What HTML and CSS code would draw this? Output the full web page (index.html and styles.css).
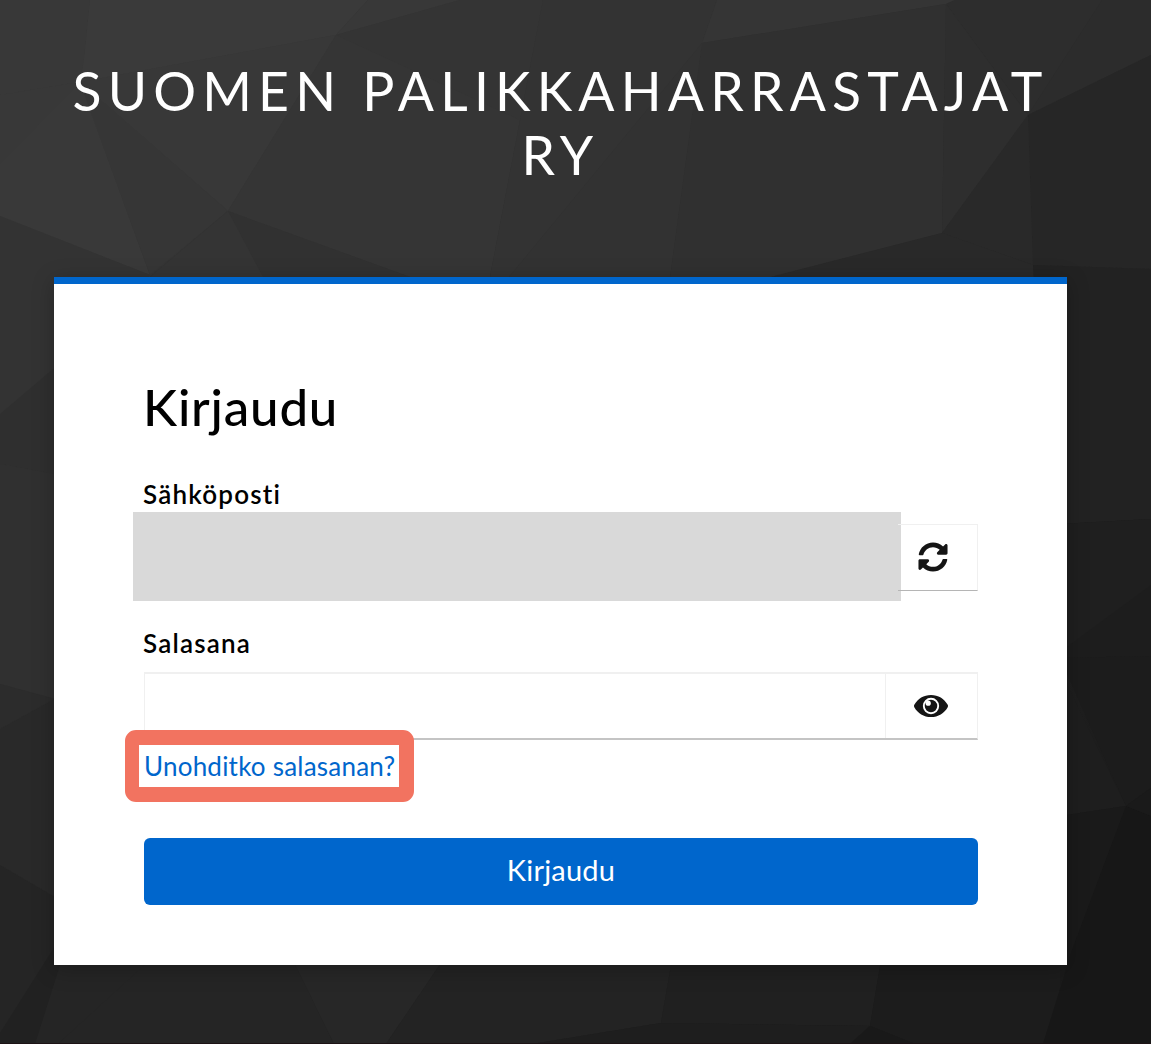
FILE: index.html
```html
<!DOCTYPE html>
<html lang="fi">
<head>
<meta charset="utf-8">
<title>Kirjaudu – Suomen Palikkaharrastajat ry</title>
<link rel="stylesheet" href="styles.css">
</head>
<body>
<div class="page">
  <svg class="backdrop" viewBox="0 0 1151 1044" preserveAspectRatio="none" aria-hidden="true">
    <defs>
      <linearGradient id="shade" gradientUnits="userSpaceOnUse" x1="200" y1="0" x2="950" y2="1044">
        <stop offset="0" stop-color="#393939"/><stop offset=".5" stop-color="#292929"/><stop offset="1" stop-color="#191919"/>
      </linearGradient>
    </defs>
    <rect width="1151" height="1044" fill="url(#shade)"/>
    <path fill="#383838" d="M0 0H90L84 59 80 82 0 95z"/>
    <path fill="#3a3a3a" d="M90 0H368L336 35 80 82 84 59z"/>
    <path fill="#383838" d="M0 95 80 82 0 164z"/>
    <path fill="#383838" d="M80 82 336 35 228 211z"/>
    <path fill="#393939" d="M0 164 80 82 150 275 0 216z"/>
    <path fill="#363636" d="M80 82 228 211 150 275z"/>
    <path fill="#353535" d="M336 35 368 0H543L490 277H410L228 211z"/>
    <path fill="#383838" d="M336 35 368 0H460z"/>
    <path fill="#343434" d="M336 35 460 0H543L520 120z"/>
    <path fill="#313131" d="M228 211 410 277H150z"/>
    <path fill="#343434" d="M228 211 263 277H150z"/>
    <path fill="#333" d="M0 216 150 275 54 367 0 414z"/>
    <path fill="#333" d="M543 0H717L702 43 575 197 509 277H490z"/>
    <path fill="#353535" d="M717 0H955L946 4 702 43z"/>
    <path fill="#303030" d="M702 43 946 4 942 233 770 277H670z"/>
    <path fill="#323232" d="M702 43 670 277H509L575 197z"/>
    <path fill="#2d2d2d" d="M946 4 955 0H1102L1028 115z"/>
    <path fill="#2e2e2e" d="M946 4 1028 115 942 233z"/>
    <path fill="#2c2c2c" d="M1102 0H1151V55L1028 115z"/>
    <path fill="#262626" d="M1028 115 1151 55V269L1033 265z"/>
    <path fill="#292929" d="M1028 115 1033 265 942 233z"/>
    <path fill="#292929" d="M942 233 1033 265V280H760z"/>
    <path fill="#222" d="M1033 265 1151 269V519L1050 525z"/>
    <path fill="#2f2f2f" d="M0 414 60 363V475L0 464z"/>
    <path fill="#303030" d="M0 464 60 475V700L0 684z"/>
    <path fill="#2c2c2c" d="M0 684 54 699 0 729z"/>
    <path fill="#292929" d="M0 729 60 696V900L0 865z"/>
    <path fill="#252525" d="M0 865 60 900V940L0 1033z"/>
    <path fill="#212121" d="M0 1033 60 938V965H150L58 1044H0z"/>
    <path fill="#252525" d="M60 965H150L58 1044H35z"/>
    <path fill="#252525" d="M150 960H293L334 1044H58z"/>
    <path fill="#272727" d="M293 960H443L386 1044H334z"/>
    <path fill="#232323" d="M443 960H672L661 1023 532 1044H386z"/>
    <path fill="#202020" d="M672 960H881L870 1026 661 1023z"/>
    <path fill="#1e1e1e" d="M661 1023 870 1026 850 1044H532z"/>
    <path fill="#1c1c1c" d="M881 960H1072L1043 1044H915L870 1026z"/>
    <path fill="#191919" d="M870 1026 915 1044H850z"/>
    <path fill="#1d1d1d" d="M1060 524 1151 519V656L1060 658z"/>
    <path fill="#1f1f1f" d="M1060 524 1151 519V585L1060 652z"/>
    <path fill="#1c1c1c" d="M1060 658 1151 656V788L1126 806z"/>
    <path fill="#1e1e1e" d="M1060 670 1126 806 1060 816z"/>
    <path fill="#1a1a1a" d="M1060 816 1126 806 1060 985z"/>
    <path fill="#171717" d="M1126 806 1151 816V1044H1043L1072 950z"/>
    <path fill="#1a1a1a" d="M1126 806 1151 788V816z"/>
    <path fill="#1d1315" d="M0 1043H1151V1044H0z"/>
  </svg>
  <main class="login">
    <h1 class="realm">Suomen Palikkaharrastajat ry</h1>
    <section class="card">
      <h2 class="title">Kirjaudu</h2>
      <form class="form">
        <div class="field">
          <span class="label">Sähköposti</span>
          <div class="row account">
            <div class="redacted"></div>
            <button class="icon-button" type="button" aria-label="Vaihda käyttäjä">
              <svg class="sync" viewBox="0 0 512 512"><path d="M370.72 133.28C339.458 104.008 298.888 87.962 255.848 88c-77.458.068-144.328 53.178-162.791 126.85-1.344 5.363-6.122 9.15-11.651 9.15H24.103c-7.498 0-13.194-6.807-11.807-14.176C33.933 94.924 134.813 8 256 8c66.448 0 126.791 26.136 171.315 68.685L463.03 40.97C478.149 25.851 504 36.559 504 57.941V192c0 13.255-10.745 24-24 24H345.941c-21.382 0-32.09-25.851-16.971-40.971zM32 296h134.059c21.382 0 32.09 25.851 16.971 40.971l-41.75 41.75c31.262 29.273 71.835 45.319 114.876 45.28 77.418-.07 144.315-53.144 162.787-126.849 1.344-5.363 6.122-9.15 11.651-9.15h57.304c7.498 0 13.194 6.807 11.807 14.176C478.067 417.076 377.187 504 256 504c-66.448 0-126.791-26.136-171.315-68.685L48.97 471.03C33.851 486.149 8 475.441 8 454.059V320c0-13.255 10.745-24 24-24z"/></svg>
            </button>
          </div>
        </div>
        <div class="field password-field">
          <label class="label" for="password">Salasana</label>
          <div class="row password">
            <input class="input" id="password" type="password">
            <button class="icon-button" type="button" aria-label="Näytä salasana">
              <svg class="eye" viewBox="0 0 34 22"><path fill="#151515" d="M.3 9.8C3.700 3.700 9.800 0 17 0s13.300 3.700 16.700 9.800c.4.800.4 1.600 0 2.400C30.300 18.300 24.200 22 17 22S3.700 18.300.3 12.200c-.4-.8-.4-1.600 0-2.400z"/><circle cx="17" cy="11" r="7.200" fill="#151515" stroke="#fff" stroke-width="1.900"/><circle cx="14.200" cy="8.200" r="2.600" fill="#fff"/></svg>
            </button>
          </div>
        </div>
        <div class="forgot"><a class="link" href="#">Unohditko salasanan?</a></div>
        <button class="submit" type="submit">Kirjaudu</button>
      </form>
    </section>
  </main>
</div>
</body>
</html>
```
FILE: styles.css
```css
* { box-sizing: border-box; }
body { margin: 0; background: #292929; font-family: Lato, sans-serif; color: #000; }
.page { display: grid; width: 1151px; height: 1044px; overflow: hidden; }
.backdrop, .login { grid-area: 1 / 1; min-width: 0; }
.backdrop { width: 1151px; height: 1044px; display: block; }
.login { width: 1013px; margin-left: 54px; padding-top: 58px; z-index: 1; }
.realm { margin: 0; height: 219px; font-size: 53.5px; font-weight: 400; line-height: 64px; letter-spacing: 6.2px; text-align: center; text-transform: uppercase; color: #fff; }
.card { height: 688px; padding: 91px 89px 60px 90px; border-top: 7px solid #06c; background: #fff; box-shadow: 0 4px 20px rgba(0, 0, 0, .25); }
.title { margin: 0 0 0 -1px; height: 102px; font-size: 51px; font-weight: 500; line-height: 64px; letter-spacing: .8px; }
.form { display: flex; flex-direction: column; }
.label { display: block; height: 35px; margin-left: -1px; font-size: 26px; font-weight: 600; line-height: 34px; letter-spacing: 1.2px; }
.field { height: 149px; }
.row { display: flex; }
.account { margin: 0 0 0 -11px; height: 89px; }
.redacted { z-index: 1; width: 768px; height: 89px; background: #d9d9d9; }
.icon-button { display: flex; align-items: center; justify-content: center; padding: 0; background: #fff; border: 1px solid #f0f0f0; border-bottom-color: #b5b5b5; }
.account .icon-button { z-index: 2; width: 80px; height: 67px; margin: 12px 0 0 -3px; padding: 0 10px 2px 0; border-left: 0; background: linear-gradient(90deg, #d9d9d9 3px, #fff 3px); }
.sync { width: 30px; height: 30px; fill: #151515; }
.password { height: 68px; margin-top: 11px; border: solid #f0f0f0; border-width: 2px 1px 2px; border-bottom-color: #c4c4c4; }
.input { flex: 1; min-width: 0; padding: 0 16px; border: 0; background: #fff; font-size: 25px; outline: 0; }
.password .icon-button { width: 92px; border-width: 0 0 0 1px; padding-right: 1px; }
.eye { width: 34px; height: 22px; }
.password-field { height: 96px; }
.forgot { z-index: 1; width: 289px; height: 72px; margin: 8px 0 0 -19px; padding-left: 5px; border: 15px solid #f27360; border-left-width: 14px; border-radius: 11px; background: #fff; }
.link { display: block; color: #06c; font-size: 26px; line-height: 42px; letter-spacing: .22px; text-decoration: none; white-space: nowrap; }
.submit { height: 67px; margin-top: 36px; padding: 0 0 3px; border: 0; border-radius: 6px; background: #06c; color: #fff; font: 400 29px/64px Lato, sans-serif; letter-spacing: .2px; }
```
